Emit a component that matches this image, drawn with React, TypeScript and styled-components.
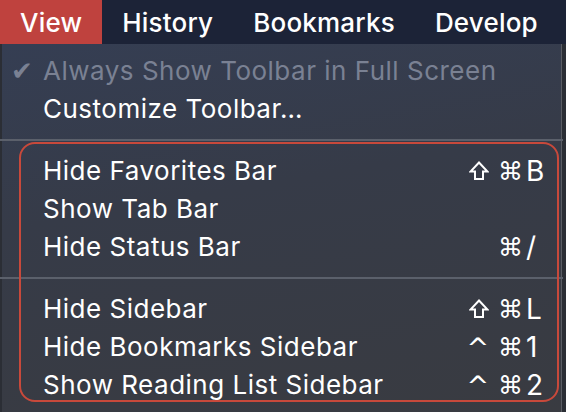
import React from "react";
import styled, { createGlobalStyle } from "styled-components";

const GlobalStyle = createGlobalStyle`
  html, body {
    margin: 0;
    padding: 0;
    background: #2b2e35;
    overflow: hidden;
  }
  body {
    font-family: Inter, "Noto Sans", "Liberation Sans", sans-serif;
    -webkit-font-smoothing: antialiased;
  }
`;

type Mod = "shift" | "ctrl" | "cmd";

type Item = {
  label: string;
  mods?: Mod[];
  keyName?: string;
  checked?: boolean;
  disabled?: boolean;
};

const groups: Item[][] = [
  [
    { label: "Always Show Toolbar in Full Screen", checked: true, disabled: true },
    { label: "Customize Toolbar…" },
  ],
  [
    { label: "Hide Favorites Bar", mods: ["shift", "cmd"], keyName: "B" },
    { label: "Show Tab Bar" },
    { label: "Hide Status Bar", mods: ["cmd"], keyName: "/" },
  ],
  [
    { label: "Hide Sidebar", mods: ["shift", "cmd"], keyName: "L" },
    { label: "Hide Bookmarks Sidebar", mods: ["ctrl", "cmd"], keyName: "1" },
    { label: "Show Reading List Sidebar", mods: ["ctrl", "cmd"], keyName: "2" },
  ],
];

const Screen = styled.div`
  width: 566px;
  height: 412px;
  display: flex;
  flex-direction: column;
  overflow: hidden;
`;

const MenuBar = styled.div`
  height: 44px;
  display: flex;
  align-items: stretch;
  background: #1c2337;
  flex-shrink: 0;
`;

const MenuTitle = styled.div<{ $active?: boolean }>`
  display: flex;
  align-items: center;
  padding: 0 20px;
  font-size: 26px;
  font-weight: 500;
  color: #ffffff;
  background: ${(p) => (p.$active ? "#bf423e" : "transparent")};
  letter-spacing: 0.2px;
`;

const Panel = styled.div`
  position: relative;
  flex: 1;
  width: 560px;
  margin-left: 2px;
  padding-top: 8px;
  background: linear-gradient(170deg, #353e53 0%, #363b48 40%, #393b41 100%);
  border-right: 1px solid #5a5d64;
  box-sizing: border-box;
`;

const Group = styled.div`
  display: flex;
  flex-direction: column;
`;

const Separator = styled.div`
  height: 2px;
  margin: 11px -2px 11px -2px;
  background: #5b606b;
`;

const Row = styled.div<{ $disabled?: boolean }>`
  height: 38px;
  display: grid;
  grid-template-columns: 41px 1fr auto 22px;
  align-items: center;
  padding-right: 13px;
  font-size: 26px;
  line-height: 38px;
  color: ${(p) => (p.$disabled ? "#7a8193" : "#ffffff")};
  white-space: nowrap;
`;

const Check = styled.span`
  padding-left: 9px;
  font-family: "DejaVu Sans", sans-serif;
  font-size: 26px;
`;

const Label = styled.span`
  letter-spacing: 0.5px;
`;

const Mods = styled.span`
  display: flex;
  align-items: center;
  justify-content: flex-end;
  gap: 9px;
  margin-right: 3px;
`;

const Glyph = styled.span<{ $size?: number }>`
  font-family: "DejaVu Sans", sans-serif;
  font-size: ${(p) => p.$size ?? 25}px;
  line-height: 1;
`;

const KeyName = styled.span`
  text-align: left;
  font-size: 28px;
`;

const Outline = styled.div`
  position: absolute;
  left: 17px;
  top: 98px;
  width: 540px;
  height: 260px;
  border: 2px solid #c8493b;
  border-radius: 16px;
  box-sizing: border-box;
  pointer-events: none;
`;

const ShiftIcon = () => (
  <svg width="20" height="20" viewBox="0 0 20 20" fill="none">
    <path
      d="M10 1.5 L18.5 10.5 H14 V18 H6 V10.5 H1.5 Z"
      stroke="#ffffff"
      strokeWidth="2"
      strokeLinejoin="miter"
    />
  </svg>
);

function ModKey({ mod }: { mod: Mod }) {
  if (mod === "shift") return <ShiftIcon />;
  if (mod === "ctrl") return <Glyph $size={27}>^</Glyph>;
  return <Glyph>⌘</Glyph>;
}

export default function App() {
  return (
    <>
      <GlobalStyle />
      <Screen>
        <MenuBar>
          <MenuTitle $active>View</MenuTitle>
          <MenuTitle>History</MenuTitle>
          <MenuTitle>Bookmarks</MenuTitle>
          <MenuTitle>Develop</MenuTitle>
        </MenuBar>
        <Panel>
          {groups.map((items, gi) => (
            <React.Fragment key={gi}>
              {gi > 0 && <Separator />}
              <Group>
                {items.map((it) => (
                  <Row key={it.label} $disabled={it.disabled}>
                    <Check>{it.checked ? "✔" : ""}</Check>
                    <Label>{it.label}</Label>
                    <Mods>
                      {(it.mods ?? []).map((m) => (
                        <ModKey key={m} mod={m} />
                      ))}
                    </Mods>
                    <KeyName>{it.keyName ?? ""}</KeyName>
                  </Row>
                ))}
              </Group>
            </React.Fragment>
          ))}
          <Outline />
        </Panel>
      </Screen>
    </>
  );
}
